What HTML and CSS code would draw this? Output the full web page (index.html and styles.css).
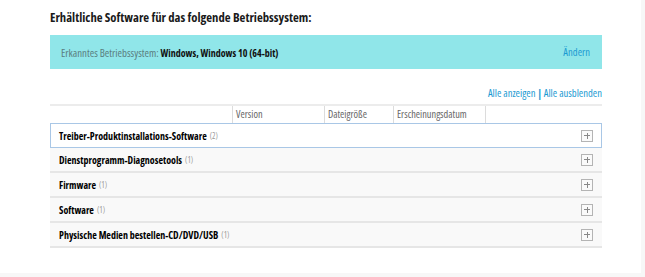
FILE: index.html
```html
<!DOCTYPE html>
<html lang="de">
<head>
<meta charset="utf-8">
<link rel="stylesheet" href="styles.css">
</head>
<body>
<div class="page">
  <div class="content">
    <h2 class="title">Erhältliche Software für das folgende Betriebssystem:</h2>
    <div class="os-box">
      <div class="os-text"><span class="os-label">Erkanntes Betriebssystem:</span> <b>Windows, Windows 10 (64-bit)</b></div>
      <a class="link" href="#">Ändern</a>
    </div>
    <div class="toggles"><a class="link" href="#">Alle anzeigen</a> <span class="sep">|</span> <a class="link" href="#">Alle ausblenden</a></div>
    <div class="thead">
      <div class="th"></div>
      <div class="th">Version</div>
      <div class="th">Dateigröße</div>
      <div class="th">Erscheinungsdatum</div>
      <div class="th last"></div>
    </div>
    <div class="row active"><span class="name">Treiber-Produktinstallations-Software</span><span class="count">(2)</span><span class="plus"></span></div>
    <div class="row"><span class="name">Dienstprogramm-Diagnosetools</span><span class="count">(1)</span><span class="plus"></span></div>
    <div class="row"><span class="name">Firmware</span><span class="count">(1)</span><span class="plus"></span></div>
    <div class="row"><span class="name">Software</span><span class="count">(1)</span><span class="plus"></span></div>
    <div class="row"><span class="name">Physische Medien bestellen-CD/DVD/USB</span><span class="count">(1)</span><span class="plus"></span></div>
  </div>
</div>
</body>
</html>
```
FILE: styles.css
```css
html, body {
  margin: 0;
  padding: 0;
  background: #f7f7f7;
}
body {
  font-family: "Open Sans", "Roboto", sans-serif;
  font-stretch: 75%;
  color: #000;
}
.page {
  width: 641px;
  height: 273px;
  background: #fff;
  box-sizing: border-box;
  padding: 9px 0 0 50px;
}
.content {
  width: 552px;
}
.title {
  margin: 0;
  font-size: 12.7px;
  font-weight: 700;
  line-height: 16px;
  height: 26px;
  color: #1a1a1a;
}
.os-box {
  height: 34px;
  background: #90e6e9;
  display: flex;
  align-items: center;
  justify-content: space-between;
  padding: 0 12px 0 11px;
  font-size: 10px;
}
.os-label {
  color: #5a7d7e;
  font-weight: 400;
  font-size: 10.8px;
}
.os-text b {
  color: #111;
  font-weight: 700;
}
.link {
  color: #1b9ad2;
  text-decoration: none;
  font-size: 10.6px;
  font-weight: 500;
}
.toggles {
  text-align: right;
  height: 35px;
  line-height: 13px;
  padding-top: 18px;
  box-sizing: border-box;
  font-size: 10.6px;
}
.toggles .sep {
  color: #1b9ad2;
  font-weight: 700;
}
.thead {
  display: grid;
  grid-template-columns: 183px 92px 69px 92px 1fr;
  border-top: 2px solid #ececec;
  height: 19px;
  box-sizing: border-box;
}
.th {
  border-right: 1px solid #dcdcdc;
  font-size: 10.3px;
  color: #666;
  padding-left: 3px;
  line-height: 17px;
}
.th.last {
  border-right: none;
}
.row {
  height: 25px;
  box-sizing: border-box;
  background: #f9f9f9;
  border-bottom: 2px solid #e6e6e6;
  display: flex;
  align-items: center;
  padding: 0 9px 0 9px;
  font-size: 10px;
}
.row.active {
  background: #fff;
  border: 1px solid #a9c7e6;
  padding-left: 8px;
  padding-right: 8px;
}
.name {
  font-weight: 700;
}
.count {
  color: #999;
  font-size: 8px;
  margin-left: 3px;
}
.plus {
  margin-left: auto;
  width: 10px;
  height: 10px;
  border: 1px solid #b4b4b4;
  position: relative;
  background: #fafafa;
}
.plus::before, .plus::after {
  content: "";
  position: absolute;
  background: #888;
}
.plus::before {
  left: 2px;
  top: 4.5px;
  width: 6px;
  height: 1px;
}
.plus::after {
  left: 4.5px;
  top: 2px;
  width: 1px;
  height: 6px;
}
```
